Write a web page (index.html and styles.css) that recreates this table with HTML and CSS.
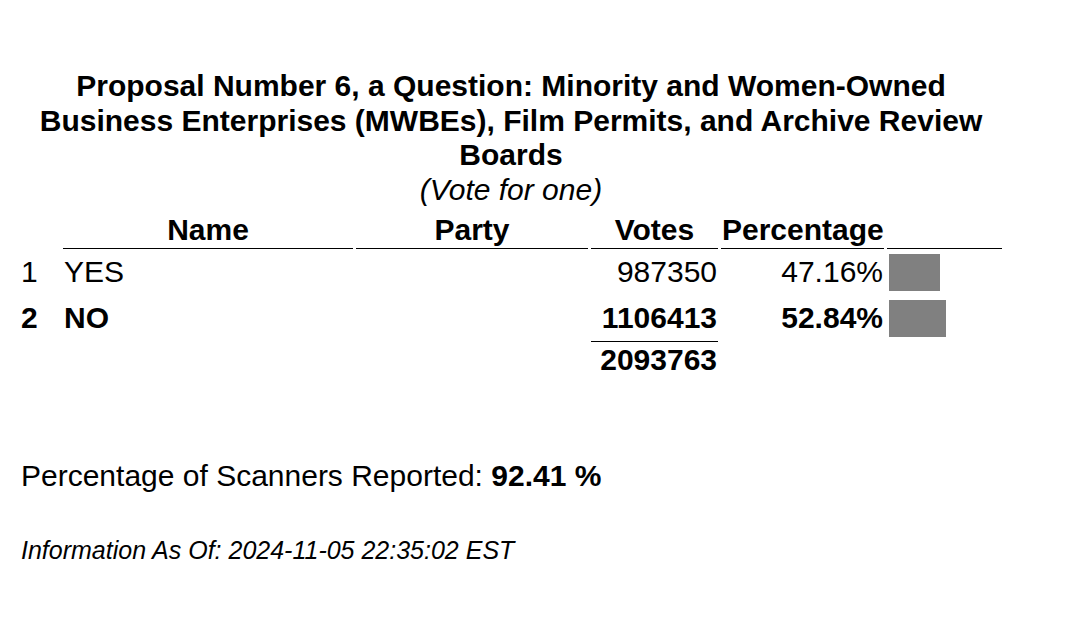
FILE: index.html
```html
<!DOCTYPE html>
<html lang="en">
<head>
<meta charset="utf-8">
<title>Proposal Number 6</title>
<link rel="stylesheet" href="styles.css">
</head>
<body>
<div class="page">
  <table class="results">
    <caption class="title">
      <div class="title-text">Proposal Number 6, a Question: Minority and Women-Owned Business Enterprises (MWBEs), Film Permits, and Archive Review Boards</div>
      <div class="vote-for">(Vote for one)</div>
    </caption>
    <colgroup>
      <col class="c-num">
      <col class="c-name">
      <col class="c-party">
      <col class="c-votes">
      <col class="c-pct">
      <col class="c-bar">
    </colgroup>
    <thead>
      <tr>
        <th class="blank"></th>
        <th class="head">Name</th>
        <th class="head">Party</th>
        <th class="head">Votes</th>
        <th class="head">Percentage</th>
        <th class="head"></th>
      </tr>
    </thead>
    <tbody>
      <tr class="row">
        <td class="num">1</td>
        <td class="name">YES</td>
        <td class="party"></td>
        <td class="votes">987350</td>
        <td class="pct">47.16%</td>
        <td class="barcell"><div class="bar" style="width:51px"></div></td>
      </tr>
      <tr class="row winner">
        <td class="num">2</td>
        <td class="name">NO</td>
        <td class="party"></td>
        <td class="votes">1106413</td>
        <td class="pct">52.84%</td>
        <td class="barcell"><div class="bar" style="width:57px"></div></td>
      </tr>
      <tr class="total-row">
        <td></td>
        <td></td>
        <td></td>
        <td class="total">2093763</td>
        <td></td>
        <td></td>
      </tr>
    </tbody>
  </table>

  <p class="scanners">Percentage of Scanners Reported: <b>92.41 %</b></p>
  <p class="asof">Information As Of: 2024-11-05 22:35:02 EST</p>
</div>
</body>
</html>
```

FILE: styles.css
```css
html, body {
  margin: 0;
  padding: 0;
  background: #ffffff;
}

body {
  font-family: "Liberation Sans", Arial, sans-serif;
  color: #000000;
  font-size: 30px;
  line-height: 34.5px;
}

.page {
  padding: 69px 0 0 17px;
}

.results {
  border-collapse: separate;
  border-spacing: 3px 0;
  table-layout: fixed;
  width: 988px;
  font-size: 30px;
  line-height: 34.5px;
}

.title {
  caption-side: top;
  text-align: center;
  padding: 0;
}

.title-text {
  font-weight: bold;
}

.vote-for {
  font-style: italic;
}

.c-num { width: 40px; }
.c-name { width: 290px; }
.c-party { width: 232px; }
.c-votes { width: 127px; }
.c-pct { width: 163px; }
.c-bar { width: 115px; }

th {
  padding: 5.5px 1px 1px;
  vertical-align: bottom;
  font-weight: bold;
  text-align: center;
  white-space: nowrap;
}

th.head {
  border-bottom: 1px solid #000000;
}

th.blank {
  border: 0;
}

td {
  padding: 5.75px 1px;
  vertical-align: middle;
  white-space: nowrap;
}

.num {
  padding-left: 1px;
  text-align: left;
}

.name {
  text-align: left;
}

.votes,
.pct {
  text-align: right;
}

.winner td {
  font-weight: bold;
}

.barcell {
  padding: 4.5px 1px 4.5px 2px;
}

.bar {
  height: 37px;
  background: #808080;
}

.total-row td {
  padding: 1px;
}

.total {
  border-top: 1px solid #000000;
  text-align: right;
  font-weight: bold;
}

.scanners {
  margin: 80.8px 0 0 4px;
  font-size: 30px;
  line-height: 34.5px;
}

.asof {
  margin: 42px 0 0 4px;
  font-size: 25px;
  line-height: 28.75px;
  font-style: italic;
}
```
